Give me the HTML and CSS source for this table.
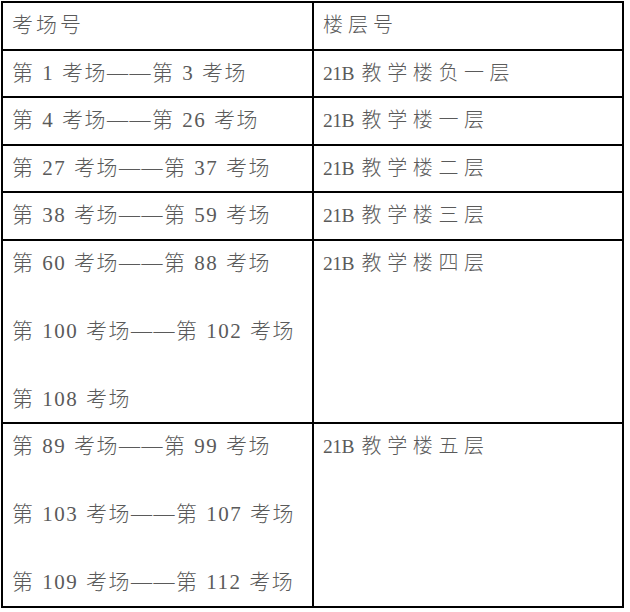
FILE: index.html
```html
<!DOCTYPE html>
<html lang="zh">
<head>
<meta charset="utf-8">
<link rel="stylesheet" href="styles.css">
</head>
<body>
<table class="grid">
  <tr>
    <td class="cell left"><div class="line head-l">考场号</div></td>
    <td class="cell right"><div class="line head-r">楼层号</div></td>
  </tr>
  <tr>
    <td class="cell left"><div class="line">第 1 考场——第 3 考场</div></td>
    <td class="cell right"><div class="line"><span class="code">21B</span> 教学楼负一层</div></td>
  </tr>
  <tr>
    <td class="cell left"><div class="line">第 4 考场——第 26 考场</div></td>
    <td class="cell right"><div class="line"><span class="code">21B</span> 教学楼一层</div></td>
  </tr>
  <tr>
    <td class="cell left"><div class="line">第 27 考场——第 37 考场</div></td>
    <td class="cell right"><div class="line"><span class="code">21B</span> 教学楼二层</div></td>
  </tr>
  <tr>
    <td class="cell left"><div class="line">第 38 考场——第 59 考场</div></td>
    <td class="cell right"><div class="line"><span class="code">21B</span> 教学楼三层</div></td>
  </tr>
  <tr class="tall">
    <td class="cell left">
      <div class="line">第 60 考场——第 88 考场</div>
      <div class="line">第 100 考场——第 102 考场</div>
      <div class="line">第 108 考场</div>
    </td>
    <td class="cell right"><div class="line"><span class="code">21B</span> 教学楼四层</div></td>
  </tr>
  <tr class="tall">
    <td class="cell left">
      <div class="line">第 89 考场——第 99 考场</div>
      <div class="line">第 103 考场——第 107 考场</div>
      <div class="line">第 109 考场——第 112 考场</div>
    </td>
    <td class="cell right"><div class="line"><span class="code">21B</span> 教学楼五层</div></td>
  </tr>
</table>
</body>
</html>
```

FILE: styles.css
```css
html, body {
  margin: 0;
  padding: 0;
  background: #ffffff;
}

body {
  padding: 1px 0 0 1px;
  font-family: "Liberation Serif", "Noto Sans CJK SC", serif;
  font-weight: 300;
  color: #5a5a5a;
}

.grid {
  border-collapse: collapse;
  width: 623px;
  table-layout: fixed;
}

.cell {
  border: 2px solid #000;
  padding: 0 0 0 9px;
  vertical-align: top;
}

.left {
  width: 300px;
  font-size: 21px;
  letter-spacing: 1.5px;
  word-spacing: 1px;
}

.right {
  font-size: 20px;
  letter-spacing: 5.6px;
  word-spacing: -3px;
}

.code {
  font-size: 19.5px;
  letter-spacing: -0.5px;
}

.head-l {
  letter-spacing: 3px;
}

.head-r {
  letter-spacing: 5px;
}

.line {
  height: 45.5px;
  line-height: 45.5px;
  white-space: nowrap;
}

.tall .line + .line {
  margin-top: 22.5px;
}
```
